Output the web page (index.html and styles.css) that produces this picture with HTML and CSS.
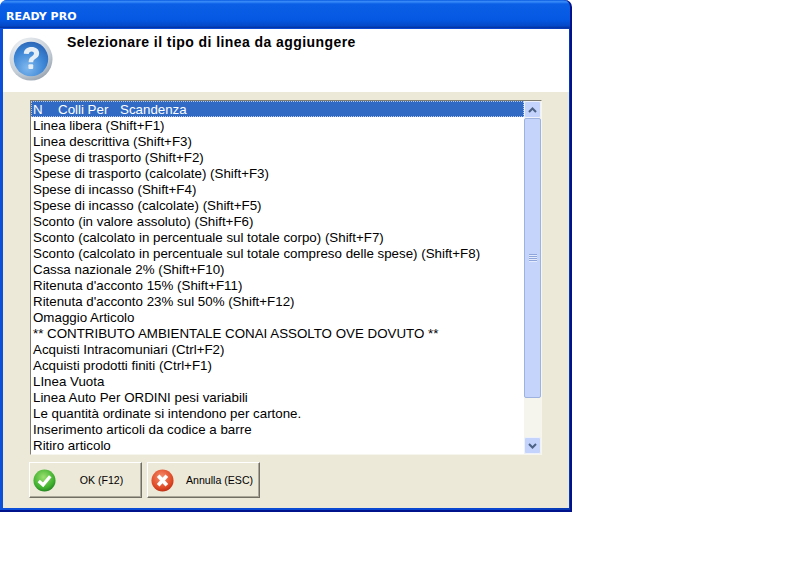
FILE: index.html
```html
<!DOCTYPE html>
<html lang="it">
<head>
    <meta charset="UTF-8">
    <title>READY PRO</title>
    <link rel="stylesheet" href="styles.css">
</head>
<body>
    <div class="window">
        <div class="titlebar">READY PRO</div>
        <div class="client">
            <div class="header">
                <svg class="icon-help" width="44" height="44" viewBox="0 0 46 46">
                    <defs>
                        <radialGradient id="ring" cx="35%" cy="25%" r="85%">
                            <stop offset="0" stop-color="#f4f6f8"/>
                            <stop offset="0.7" stop-color="#c4cdd6"/>
                            <stop offset="1" stop-color="#8c98a6"/>
                        </radialGradient>
                        <radialGradient id="ball" cx="40%" cy="75%" r="80%">
                            <stop offset="0" stop-color="#7fb8ee"/>
                            <stop offset="0.6" stop-color="#3d86d6"/>
                            <stop offset="1" stop-color="#2a62b4"/>
                        </radialGradient>
                    </defs>
                    <circle cx="23" cy="23" r="22.500" fill="url(#ring)"/>
                    <circle cx="23" cy="23" r="18" fill="url(#ball)"/>
                    <path d="M15.5 17.5c0-4.5 3.5-7 8-7 4.700 0 8 2.500 8 6.500 0 3-1.800 4.500-3.800 5.800-1.700 1.100-2.400 1.900-2.400 3.700h-4.800c0-3.200 1-4.700 3.200-6.200 1.500-1 2.400-1.800 2.400-3 0-1.300-1-2.200-2.500-2.200-1.700 0-2.800 1-2.900 2.600z" fill="#e8eef5"/>
                    <rect x="20.300" y="28.500" width="5" height="5" rx="1" fill="#e8eef5"/>
                </svg>
                <h1>Selezionare il tipo di linea da aggiungere</h1>
            </div>
            <div class="body">
                <div class="listbox">
                    <ul class="items">
                        <li class="selected"><span class="col-n">N</span><span class="col-colli">Colli Per</span>Scandenza</li>
                        <li>Linea libera (Shift+F1)</li>
                        <li>Linea descrittiva (Shift+F3)</li>
                        <li>Spese di trasporto (Shift+F2)</li>
                        <li>Spese di trasporto (calcolate) (Shift+F3)</li>
                        <li>Spese di incasso (Shift+F4)</li>
                        <li>Spese di incasso (calcolate) (Shift+F5)</li>
                        <li>Sconto (in valore assoluto) (Shift+F6)</li>
                        <li>Sconto (calcolato in percentuale sul totale corpo) (Shift+F7)</li>
                        <li>Sconto (calcolato in percentuale sul totale compreso delle spese) (Shift+F8)</li>
                        <li>Cassa nazionale 2% (Shift+F10)</li>
                        <li>Ritenuta d'acconto 15% (Shift+F11)</li>
                        <li>Ritenuta d'acconto 23% sul 50% (Shift+F12)</li>
                        <li>Omaggio Articolo</li>
                        <li>** CONTRIBUTO AMBIENTALE CONAI ASSOLTO OVE DOVUTO **</li>
                        <li>Acquisti Intracomuniari (Ctrl+F2)</li>
                        <li>Acquisti prodotti finiti (Ctrl+F1)</li>
                        <li>LInea Vuota</li>
                        <li>Linea Auto Per ORDINI pesi variabili</li>
                        <li>Le quantità ordinate si intendono per cartone.</li>
                        <li>Inserimento articoli da codice a barre</li>
                        <li>Ritiro articolo</li>
                    </ul>
                    <div class="scrollbar">
                        <div class="arrow">
                            <svg width="9" height="6" viewBox="0 0 9 6"><path d="M1 5l3.500-3.500L8 5" fill="none" stroke="#4d6185" stroke-width="2"/></svg>
                        </div>
                        <div class="thumb">
                            <div class="grip"></div>
                        </div>
                        <div class="track"></div>
                        <div class="arrow">
                            <svg width="9" height="6" viewBox="0 0 9 6"><path d="M1 1l3.500 3.500L8 1" fill="none" stroke="#4d6185" stroke-width="2"/></svg>
                        </div>
                    </div>
                </div>
                <div class="buttons">
                    <button class="btn">
                        <svg width="23" height="23" viewBox="0 0 24 24">
                            <defs>
                                <radialGradient id="green" cx="45%" cy="35%" r="70%">
                                    <stop offset="0" stop-color="#9be070"/>
                                    <stop offset="0.7" stop-color="#3fb02e"/>
                                    <stop offset="1" stop-color="#1d7a1e"/>
                                </radialGradient>
                            </defs>
                            <circle cx="12" cy="12" r="11.500" fill="url(#green)"/>
                            <path d="M6 12.500l4.500 4L18 7.500" fill="none" stroke="#fff" stroke-width="3.400"/>
                        </svg>
                        <span class="btn-label">OK (F12)</span>
                    </button>
                    <button class="btn">
                        <svg width="23" height="23" viewBox="0 0 24 24">
                            <defs>
                                <radialGradient id="red" cx="45%" cy="35%" r="70%">
                                    <stop offset="0" stop-color="#f59070"/>
                                    <stop offset="0.7" stop-color="#e04a26"/>
                                    <stop offset="1" stop-color="#b52a12"/>
                                </radialGradient>
                            </defs>
                            <circle cx="12" cy="12" r="11.500" fill="url(#red)"/>
                            <path d="M7.500 7l9 10M16.500 7l-9 10" fill="none" stroke="#fff" stroke-width="3.800"/>
                        </svg>
                        <span class="btn-label">Annulla (ESC)</span>
                    </button>
                </div>
            </div>
        </div>
    </div>
</body>
</html>
```

FILE: styles.css
```css
body {
    margin: 0;
    background-color: #fff;
    font-family: "Liberation Sans", Arial, sans-serif;
    font-size: 13.33px;
    color: #000;
}

.window {
    width: 572px;
    height: 512px;
    box-sizing: border-box;
    display: flex;
    flex-direction: column;
    border-radius: 7px 7px 0 0;
    background-image: linear-gradient(to right, #0c4fd8, #0a46cf 90%, #0838b0);
    border-bottom: 2px solid #00138c;
    border-right: 2px solid #00138c;
}

.titlebar {
    height: 28px;
    flex: none;
    box-sizing: border-box;
    padding: 10px 0 0 6px;
    color: #fff;
    font-family: "DejaVu Sans", sans-serif;
    font-size: 11px;
    font-weight: bold;
    line-height: 14px;
    border-radius: 7px 7px 0 0;
    background-image: linear-gradient(to bottom, #0a5be0 0, #3b8dfa 6%, #0a5fe6 14%, #0558e2 70%, #0449c8 92%, #02319f 100%);
}

.client {
    flex: 1;
    margin: 1px 1px 2px 3px;
    display: flex;
    flex-direction: column;
    background-color: #ece9d8;
}

.header {
    height: 63px;
    flex: none;
    display: flex;
    background-color: #fff;
}

.icon-help {
    margin: 8px 0 0 6px;
}

h1 {
    margin: 5px 0 0 14px;
    font-family: "Liberation Sans", Arial, sans-serif;
    font-size: 14px;
    font-weight: bold;
    letter-spacing: 0.43px;
    line-height: 16px;
}

.body {
    padding: 8px 0 0 26px;
}

.listbox {
    width: 512px;
    height: 355px;
    margin-left: 1px;
    box-sizing: border-box;
    display: flex;
    background-color: #fff;
    border: 1px solid;
    border-color: #7f7d72 #f6f5ee #f6f5ee #7f7d72;
}

.items {
    flex: 1;
    margin: 0;
    padding: 0;
    list-style: none;
    overflow: hidden;
}

.items li {
    height: 16px;
    padding-left: 2px;
    line-height: 17px;
    white-space: nowrap;
}

.items .selected {
    color: #fff;
    background-color: #316ac5;
    outline: 1px dotted #b9c8e4;
    outline-offset: -1px;
}

.col-n {
    display: inline-block;
    width: 25px;
}

.col-colli {
    display: inline-block;
    width: 62px;
}

.scrollbar {
    width: 17px;
    display: flex;
    flex-direction: column;
    background-color: #f5f4ed;
    flex: none;
}

.arrow {
    height: 17px;
    flex: none;
    display: flex;
    align-items: center;
    justify-content: center;
    box-sizing: border-box;
    border: 1px solid #eef0fa;
    border-radius: 2px;
    background-color: #c3d3fb;
}

.thumb {
    height: 280px;
    flex: none;
    display: flex;
    align-items: center;
    justify-content: center;
    box-sizing: border-box;
    border: 1px solid #9eb2e0;
    border-radius: 2px;
    background-color: #c5d4fb;
}

.grip {
    width: 8px;
    height: 8px;
    background-image: repeating-linear-gradient(to bottom, #8ea6dc 0, #8ea6dc 1px, #e4ebfd 1px, #e4ebfd 2px);
}

.track {
    flex: 1;
}

.buttons {
    display: flex;
    gap: 5px;
    margin: 7px 0 0 0;
}

.btn {
    width: 113px;
    height: 36px;
    display: flex;
    align-items: center;
    padding: 0 0 0 3px;
    box-sizing: border-box;
    background-color: #ece9d8;
    border: 1px solid;
    border-color: #fff #716f64 #716f64 #fff;
    box-shadow: inset -1px -1px 0 #aca899;
}

.btn-label {
    flex: 1;
    padding-left: 6px;
    text-align: center;
    font-family: "Liberation Sans", Arial, sans-serif;
    font-size: 10.600px;
    color: #000;
}
```
